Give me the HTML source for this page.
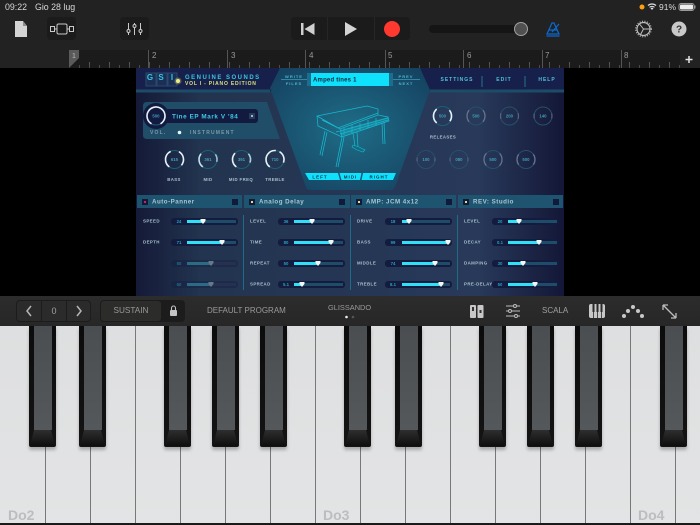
<!DOCTYPE html>
<html><head><meta charset="utf-8"><style>
html,body{margin:0;padding:0;background:#000}
#p{position:relative;width:700px;height:525px;overflow:hidden;background:#000;font-family:"Liberation Sans",sans-serif;filter:blur(.3px)}
.a{position:absolute}
.w{position:absolute;top:326px;height:197px;width:1px;background:#77787a}
.b{position:absolute;top:326px;width:27px;height:121px;background:linear-gradient(#0c0c0c,#141414);border-radius:0 0 2px 2px;box-shadow:0 3px 3px rgba(0,0,0,.25)}
.b i{position:absolute;left:5px;width:18px;top:0;height:104px;background:linear-gradient(#4a4e51,#55585b);display:block}
.b u{position:absolute;left:1px;right:1px;top:104px;height:16px;background:linear-gradient(#2e2e2e,#0e0e0e);clip-path:polygon(4px 0,21px 0,25px 100%,0 100%);display:block}
.n{position:absolute;top:507px;font-size:14px;font-weight:bold;color:#bcbdbe}
circle[pathLength]{fill:none}
</style></head><body><div id="p">
<div class="a" style="left:0;top:0;width:700px;height:50px;background:#222223"></div>
<div class="a" style="left:0;top:50px;width:70px;height:18px;background:#222223"></div>
<div class="a" style="left:70px;top:50px;width:610px;height:18px;background:#1b1b1c"></div>
<div class="a" style="left:680px;top:50px;width:20px;height:18px;background:#222223"></div>
<div class="a" style="left:70px;top:62px;width:610px;height:6px;background:repeating-linear-gradient(90deg,transparent 0,transparent 19px,#555 19px,#555 20px)"></div>
<div class="a" style="left:70px;top:65px;width:610px;height:3px;background:repeating-linear-gradient(90deg,transparent 0,transparent 9px,#4a4a4a 9px,#4a4a4a 10px)"></div>
<div class="a" style="left:5px;top:2px;font-size:8.800px;line-height:11px;color:#d8d8d8">09:22</div>
<div class="a" style="left:35px;top:2px;font-size:8.800px;line-height:11px;color:#d8d8d8">Gio 28 lug</div>
<div class="a" style="left:659px;top:2px;font-size:8.500px;line-height:11px;color:#d8d8d8">91%</div>
<div class="a" style="left:47px;top:17px;width:29px;height:23px;background:#1b1b1c;border-radius:4px"></div>
<div class="a" style="left:120px;top:17px;width:29px;height:23px;background:#1b1b1c;border-radius:4px"></div>
<div class="a" style="left:291px;top:17px;width:119px;height:23px;background:#1b1b1c;border-radius:4px"></div>
<div class="a" style="left:327px;top:17px;width:1px;height:23px;background:#262626"></div>
<div class="a" style="left:374px;top:17px;width:1px;height:23px;background:#262626"></div>
<div class="a" style="left:429px;top:25px;width:94px;height:8px;background:#151516;border-radius:4px"></div>
<div class="a" style="left:152px;top:51px;font-size:8px;color:#9a9a9a">2</div>
<div class="a" style="left:231px;top:51px;font-size:8px;color:#9a9a9a">3</div>
<div class="a" style="left:309px;top:51px;font-size:8px;color:#9a9a9a">4</div>
<div class="a" style="left:388px;top:51px;font-size:8px;color:#9a9a9a">5</div>
<div class="a" style="left:467px;top:51px;font-size:8px;color:#9a9a9a">6</div>
<div class="a" style="left:545px;top:51px;font-size:8px;color:#9a9a9a">7</div>
<div class="a" style="left:624px;top:51px;font-size:8px;color:#9a9a9a">8</div>
<svg class="a" style="left:0;top:0" width="700" height="70" viewBox="0 0 700 70">
<g stroke="#555" stroke-width="1"><path d="M148.500 50V68M227.500 50V68M305.500 50V68M385.500 50V68M463.500 50V68M542.500 50V68M621.500 50V68"/></g>
<path d="M69 50h10v8l-10 10z" fill="#5a5a5a"/><text x="72" y="58" font-size="7" fill="#bbb" font-family="Liberation Sans">1</text>
<path d="M15 21h8l4 5v11H15z" fill="#d4d4d4"/><path d="M23 21l4 5h-4z" fill="#8d8d8d"/>
<g fill="none" stroke="#c9c9c9" stroke-width="1"><rect x="50.500" y="26.500" width="4" height="5"/><rect x="57" y="24" width="10" height="10" rx="1.500"/><rect x="69.500" y="26.500" width="4" height="5"/><path d="M54.500 29H57M67 29h2.500M128.500 23v12M134.500 23v12M140.500 23v12"/></g>
<g fill="#1b1b1c" stroke="#c9c9c9"><circle cx="128.500" cy="31" r="1.500"/><circle cx="134.500" cy="26" r="1.500"/><circle cx="140.500" cy="31" r="1.500"/></g>
<path d="M301 23h2.500v12H301zM314.500 23v12l-10-6z" fill="#cfcfcf"/>
<path d="M345 22l12 7-12 7z" fill="#d4d4d4"/>
<circle cx="392" cy="29" r="8" fill="#ff3830"/>
<circle cx="521" cy="29" r="6.500" fill="#505050" stroke="#a2a2a2"/>
<g fill="none" stroke="#0a6ad0" stroke-width="1.200"><path d="M547 34l5-11h2l5 11zM546.500 36h13M549 30h8M552 32l7-8"/></g>
<circle cx="643.500" cy="29" r="6.500" fill="none" stroke="#bdbdbd" stroke-width="1.200"/><circle cx="643.500" cy="29" r="7.800" fill="none" stroke="#bdbdbd" stroke-width="1.200" stroke-dasharray="1 1.500"/>
<path d="M643.500 29l-4-5M643.500 29l6.500 0M643.500 29l-3 5.500" stroke="#bdbdbd" fill="none"/>
<circle cx="679" cy="29" r="7.500" fill="#c9c9c9"/><text x="679" y="32.500" font-size="10" font-weight="bold" text-anchor="middle" fill="#333" font-family="Liberation Sans">?</text>
<circle cx="642" cy="7" r="2.500" fill="#ff9f0a"/>
<path d="M648 5.500a6 6 0 0 1 8 0M649.500 7.300a4 4 0 0 1 5 0" stroke="#ddd" fill="none" stroke-width="1.200"/><path d="M652 10l-1.500-1.700a2 2 0 0 1 3 0z" fill="#ddd"/>
<rect x="679" y="3.500" width="15" height="7" rx="2" fill="none" stroke="#999"/><rect x="680" y="4.500" width="13" height="5" rx="1" fill="#eee"/><rect x="694.500" y="5.500" width="1" height="3" fill="#999"/>
<path d="M689 56v7M685.500 59.500h7" stroke="#e4e4e4" stroke-width="1.500"/>
</svg>

<svg class="a" style="left:136px;top:68px;filter:blur(.25px)" width="428" height="228" viewBox="136 68 428 228" font-family="Liberation Sans" font-weight="bold">
<defs>
<linearGradient id="bg" x1="0" x2="1" y1="0" y2="0"><stop offset="0" stop-color="#141a38"/><stop offset=".15" stop-color="#22344f"/><stop offset=".8" stop-color="#28395a"/><stop offset="1" stop-color="#141737"/></linearGradient>
<radialGradient id="tl" cx=".5" cy=".5" r=".7"><stop offset="0" stop-color="#1f6d87"/><stop offset="1" stop-color="#143f5e"/></radialGradient>
</defs>
<rect x="136" y="68" width="428" height="228" fill="url(#bg)"/>
<rect x="136" y="68" width="144" height="23" fill="#17204a"/>
<rect x="420" y="68" width="144" height="23" fill="#17204a"/>
<path d="M136 91h134M430 91h134" stroke="#1d4c68" stroke-width="3"/>
<path d="M280 68H420L430 90 395 187Q394 190 390 190H310Q307 190 306 187L270 88z" fill="url(#tl)"/>
<path d="M143 106q0-4 4-4H267L280 139H147q-4 0-4-4z" fill="#204d68"/>
<rect x="146" y="73" width="10" height="13" fill="#1b2f56" stroke="#2a4a6a"/><rect x="157" y="73" width="10" height="13" fill="#1b2f56" stroke="#2a4a6a"/><rect x="168" y="73" width="9" height="13" fill="#1b2f56" stroke="#2a4a6a"/>
<g font-size="8" fill="#37c4e0" text-anchor="middle"><text x="150" y="80">G</text><text x="161" y="80">S</text><text x="172" y="80">I</text></g>
<circle cx="178" cy="81" r="2" fill="#f0f080"/><circle cx="178" cy="81" r="3.500" fill="#f0f080" opacity=".3"/>
<text x="185" y="79" font-size="6" letter-spacing="1.500" fill="#3bc5dd">GENUINE SOUNDS</text>
<text x="185" y="84.800" font-size="5" letter-spacing=".8" fill="#dde080">VOL I - PIANO EDITION</text>
<g font-size="4" letter-spacing="1" fill="#4fb7cf" text-anchor="middle"><text x="294" y="78">WRITE</text><text x="294" y="85">FILES</text><text x="406" y="78">PREV</text><text x="406" y="85">NEXT</text></g>
<path d="M281 79.500h27M392 79.500h28" stroke="#3b9cb8" stroke-width=".7"/>
<rect x="307" y="73" width="5" height="13" fill="#1d6e8c"/><rect x="388" y="73" width="5" height="13" fill="#1d6e8c"/>
<rect x="311" y="73" width="78" height="13" fill="#0fe0fb"/>
<text x="313" y="81.500" font-size="6" fill="#0b2940" letter-spacing=".2">Amped tines 1</text>
<g font-size="5" letter-spacing="1" fill="#4fc0d8" text-anchor="middle"><text x="457" y="81">SETTINGS</text><text x="504" y="81">EDIT</text><text x="547" y="81">HELP</text></g>
<path d="M482 76v11M525 76v11" stroke="#26708d"/>
<rect x="165" y="109" width="93" height="14" rx="3" fill="#121a40"/>
<text x="172" y="118.500" font-size="6.300" letter-spacing=".6" fill="#3ccbe4">Tine EP Mark V '84</text>
<rect x="249" y="113" width="6" height="6" fill="#2a3a5e"/><rect x="251" y="115" width="2" height="2" fill="#8ca"/>
<circle cx="156" cy="116" r="13" fill="#121a40"/>
<g font-size="5" letter-spacing="1.200" fill="#7d98a8"><text x="150" y="134">VOL.</text><text x="190" y="134">INSTRUMENT</text></g>
<circle cx="179.500" cy="132.500" r="1.800" fill="#e8f6fa"/>
<!-- knob tracks -->
<g fill="none" stroke="#1b5f77" stroke-width="1.100">
<circle cx="156" cy="116" r="9"/>
<circle cx="174.500" cy="159.500" r="9"/><circle cx="208" cy="159.500" r="9"/><circle cx="241.500" cy="159.500" r="9"/><circle cx="275" cy="159.500" r="9"/>
<circle cx="442.500" cy="116" r="9.500"/></g>
<g fill="none" stroke="#27506b" stroke-width="1">
<circle cx="476" cy="116" r="9"/><circle cx="509.500" cy="116" r="9"/><circle cx="543" cy="116" r="9"/>
<circle cx="426" cy="159.500" r="9"/><circle cx="459" cy="159.500" r="9"/><circle cx="493" cy="159.500" r="9"/><circle cx="526" cy="159.500" r="9"/></g>
<!-- bright arcs -->
<g stroke="#e4f3f7" stroke-width="1.600">
<circle pathLength="360" cx="156" cy="116" r="9" stroke-dasharray="300 60" transform="rotate(120 156 116)"/>
<circle pathLength="360" cx="174.500" cy="159.500" r="9" stroke-dasharray="120 240" transform="rotate(125 174.500 159.500)"/>
<circle pathLength="360" cx="174.500" cy="159.500" r="9" stroke-dasharray="100 260" transform="rotate(300 174.500 159.500)"/>
<circle pathLength="360" cx="208" cy="159.500" r="9" stroke-dasharray="95 265" transform="rotate(125 208 159.500)" stroke="#bfe4ed"/>
<circle pathLength="360" cx="208" cy="159.500" r="9" stroke-dasharray="50 310" transform="rotate(325 208 159.500)" stroke="#8fc5d3"/>
<circle pathLength="360" cx="241.500" cy="159.500" r="9" stroke-dasharray="100 260" transform="rotate(125 241.500 159.500)"/>
<circle pathLength="360" cx="241.500" cy="159.500" r="9" stroke-dasharray="60 300" transform="rotate(320 241.500 159.500)" stroke="#a4d3de"/>
<circle pathLength="360" cx="275" cy="159.500" r="9" stroke-dasharray="150 210" transform="rotate(125 275 159.500)"/>
<circle pathLength="360" cx="275" cy="159.500" r="9" stroke-dasharray="80 280" transform="rotate(300 275 159.500)"/>
<circle pathLength="360" cx="442.500" cy="116" r="9" stroke-dasharray="100 260" transform="rotate(130 442.500 116)"/>
<circle pathLength="360" cx="442.500" cy="116" r="9" stroke-dasharray="75 285" transform="rotate(320 442.500 116)"/>
</g>
<!-- dim arcs -->
<g stroke="#66748c" stroke-width="1.300">
<circle pathLength="360" cx="476" cy="116" r="9" stroke-dasharray="80 280" transform="rotate(140 476 116)"/>
<circle pathLength="360" cx="476" cy="116" r="9" stroke-dasharray="80 280" transform="rotate(320 476 116)"/>
<circle pathLength="360" cx="493" cy="159.500" r="9" stroke-dasharray="85 275" transform="rotate(138 493 159.500)"/>
<circle pathLength="360" cx="493" cy="159.500" r="9" stroke-dasharray="85 275" transform="rotate(318 493 159.500)"/>
<circle pathLength="360" cx="526" cy="159.500" r="9" stroke-dasharray="70 290" transform="rotate(145 526 159.500)"/>
<circle pathLength="360" cx="526" cy="159.500" r="9" stroke-dasharray="70 290" transform="rotate(325 526 159.500)"/>
</g>
<g stroke="#55647c" stroke-width="1.200">
<circle pathLength="360" cx="509.500" cy="116" r="9" stroke-dasharray="36 324" transform="rotate(162 509.500 116)"/>
<circle pathLength="360" cx="509.500" cy="116" r="9" stroke-dasharray="36 324" transform="rotate(342 509.500 116)"/>
<circle pathLength="360" cx="543" cy="116" r="9" stroke-dasharray="30 330" transform="rotate(165 543 116)"/>
<circle pathLength="360" cx="543" cy="116" r="9" stroke-dasharray="30 330" transform="rotate(345 543 116)"/>
<circle pathLength="360" cx="426" cy="159.500" r="9" stroke-dasharray="24 336" transform="rotate(168 426 159.500)"/>
<circle pathLength="360" cx="426" cy="159.500" r="9" stroke-dasharray="24 336" transform="rotate(348 426 159.500)"/>
<circle pathLength="360" cx="459" cy="159.500" r="9" stroke-dasharray="24 336" transform="rotate(168 459 159.500)"/>
<circle pathLength="360" cx="459" cy="159.500" r="9" stroke-dasharray="24 336" transform="rotate(348 459 159.500)"/>
</g>
<g font-size="4.300" fill="#3f9db6" text-anchor="middle"><text x="156" y="117.500">500</text><text x="174.500" y="161">615</text><text x="208" y="161">361</text><text x="241.500" y="161">391</text><text x="275" y="161">710</text><text x="442.500" y="117.500">500</text><text x="476" y="117.500">500</text><text x="509.500" y="117.500">200</text><text x="543" y="117.500">140</text><text x="426" y="161">100</text><text x="459" y="161">080</text><text x="493" y="161">500</text><text x="526" y="161">500</text></g>
<g font-size="4.300" letter-spacing=".4" fill="#a8c0cc" text-anchor="middle"><text x="174" y="181">BASS</text><text x="208" y="181">MID</text><text x="241" y="181">MID FREQ</text><text x="275" y="181">TREBLE</text><text x="443" y="138.500">RELEASES</text></g>
<!-- piano -->
<path d="M340 130L388 117 389 121 342 137z" fill="#1aa6bd" opacity=".45"/>
<g fill="none" stroke="#17b8cf" stroke-width=".75">
<path d="M317 116L367 106 378 109 378 115 388 117 389 121 342 137 318 126zM317 116L340 129 378 115M340 129L342 137M322 120L338 128 378 113M336 132L388 118M340 134L388 120M344 128V135M352 125V133M360 123V130M368 120V128M376 118V125"/>
<path d="M325 131L320 155M327 132L322 156M342 137L336 167M344 137L338 167M382 123L383 144M384 122L385 144M353 133L355 146M357 132L358 147"/>
</g>
<path d="M353 145l6 2 6 3-2 2-6-2-5-3z" fill="#146a82" stroke="#17b8cf" stroke-width=".6"/>
<path d="M305 173H338L340 180H309zM339.500 173H361.500L360 180H341.500zM363 173H396L393 180H361.500z" fill="#0fe0fb"/>
<g font-size="4.500" letter-spacing="1" fill="#0b3048" text-anchor="middle"><text x="320" y="178.500">LEFT</text><text x="350.500" y="178.500">MIDI</text><text x="379" y="178.500">RIGHT</text></g>
<rect x="137" y="195" width="105" height="13" fill="#1e5470"/><rect x="244" y="195" width="106" height="13" fill="#1e5470"/><rect x="351" y="195" width="105" height="13" fill="#1e5470"/><rect x="458" y="195" width="105" height="13" fill="#1e5470"/>
<g fill="#121a3c"><rect x="142" y="199" width="6" height="6"/><rect x="249" y="199" width="6" height="6"/><rect x="356" y="199" width="6" height="6"/><rect x="463" y="199" width="6" height="6"/><rect x="232" y="199" width="6" height="6"/><rect x="339" y="199" width="6" height="6"/><rect x="446" y="199" width="6" height="6"/><rect x="553" y="199" width="6" height="6"/></g>
<rect x="144" y="201" width="2" height="2" fill="#d0205a"/><rect x="251" y="201" width="2" height="2" fill="#e0e080"/><rect x="358" y="201" width="2" height="2" fill="#e0e080"/><rect x="465" y="201" width="2" height="2" fill="#e0e080"/>
<g font-size="6.200" letter-spacing=".5" fill="#a9c6d2"><text x="152" y="203.500">Auto-Panner</text><text x="259" y="203.500">Analog Delay</text><text x="366" y="203.500">AMP: JCM 4x12</text><text x="473" y="203.500">REV: Studio</text></g>
<path d="M243.500 215V290M350.500 215V290M457.500 215V290" stroke="#1c6c8a" stroke-width="1"/>
<g font-size="4.400" letter-spacing=".4" fill="#a8c0cc">
<text x="143" y="222.500">SPEED</text><text x="143" y="243.500">DEPTH</text>
<text x="250" y="222.500">LEVEL</text><text x="250" y="243.500">TIME</text><text x="250" y="264.500">REPEAT</text><text x="250" y="285.500">SPREAD</text>
<text x="357" y="222.500">DRIVE</text><text x="357" y="243.500">BASS</text><text x="357" y="264.500">MIDDLE</text><text x="357" y="285.500">TREBLE</text>
<text x="464" y="222.500">LEVEL</text><text x="464" y="243.500">DECAY</text><text x="464" y="264.500">DAMPING</text><text x="464" y="285.500">PRE-DELAY</text></g>
<g fill="#131b3e">
<rect x="171" y="218" width="67" height="7" rx="3"/><rect x="171" y="239" width="67" height="7" rx="3"/><rect x="171" y="260" width="67" height="7" rx="3" opacity=".35"/><rect x="171" y="281" width="67" height="7" rx="3" opacity=".35"/>
<rect x="278" y="218" width="67" height="7" rx="3"/><rect x="278" y="239" width="67" height="7" rx="3"/><rect x="278" y="260" width="67" height="7" rx="3"/><rect x="278" y="281" width="67" height="7" rx="3"/>
<rect x="385" y="218" width="67" height="7" rx="3"/><rect x="385" y="239" width="67" height="7" rx="3"/><rect x="385" y="260" width="67" height="7" rx="3"/><rect x="385" y="281" width="67" height="7" rx="3"/>
<rect x="492" y="218" width="67" height="7" rx="3"/><rect x="492" y="239" width="67" height="7" rx="3"/><rect x="492" y="260" width="67" height="7" rx="3"/><rect x="492" y="281" width="67" height="7" rx="3"/></g>
<g fill="#1f4d69">
<rect x="187" y="220" width="49" height="3"/><rect x="187" y="241" width="49" height="3"/>
<rect x="294" y="220" width="49" height="3"/><rect x="294" y="241" width="49" height="3"/><rect x="294" y="262" width="49" height="3"/><rect x="294" y="283" width="49" height="3"/>
<rect x="402" y="220" width="48" height="3"/><rect x="402" y="241" width="48" height="3"/><rect x="402" y="262" width="48" height="3"/><rect x="402" y="283" width="48" height="3"/>
<rect x="508" y="220" width="49" height="3"/><rect x="508" y="241" width="49" height="3"/><rect x="508" y="262" width="49" height="3"/><rect x="508" y="283" width="49" height="3"/></g>
<g fill="#25314f"><rect x="187" y="262" width="49" height="3"/><rect x="187" y="283" width="49" height="3"/></g>
<g fill="#2fe0f6">
<rect x="187" y="220" width="16" height="3"/><rect x="187" y="241" width="35" height="3"/>
<rect x="294" y="220" width="18" height="3"/><rect x="294" y="241" width="37" height="3"/><rect x="294" y="262" width="24" height="3"/><rect x="294" y="283" width="8" height="3"/>
<rect x="402" y="220" width="7" height="3"/><rect x="402" y="241" width="46" height="3"/><rect x="402" y="262" width="33" height="3"/><rect x="402" y="283" width="39" height="3"/>
<rect x="508" y="220" width="11" height="3"/><rect x="508" y="241" width="31" height="3"/><rect x="508" y="262" width="15" height="3"/><rect x="508" y="283" width="27" height="3"/></g>
<g fill="#2a6c83"><rect x="187" y="262" width="24" height="3"/><rect x="187" y="283" width="24" height="3"/></g>
<g fill="#f2f6f7">
<path d="M200.500 219h5v2l-2.500 3-2.500-3zM219.500 240h5v2l-2.500 3-2.500-3zM309.500 219h5v2l-2.500 3-2.500-3zM328.500 240h5v2l-2.500 3-2.500-3zM315.500 261h5v2l-2.500 3-2.500-3zM299.500 282h5v2l-2.500 3-2.500-3zM406.500 219h5v2l-2.500 3-2.500-3zM445.500 240h5v2l-2.500 3-2.500-3zM432.500 261h5v2l-2.500 3-2.500-3zM438.500 282h5v2l-2.500 3-2.500-3zM516.500 219h5v2l-2.500 3-2.500-3zM536.500 240h5v2l-2.500 3-2.500-3zM520.500 261h5v2l-2.500 3-2.500-3zM532.500 282h5v2l-2.500 3-2.500-3z"/></g>
<path d="M208.500 261h5v2l-2.500 3-2.500-3zM208.500 282h5v2l-2.500 3-2.500-3z" fill="#66788a"/>
<g font-size="4.300" fill="#2b9fbe" text-anchor="middle"><text x="179" y="223">24</text><text x="179" y="244">71</text><text x="179" y="265" opacity=".6">50</text><text x="179" y="286" opacity=".6">50</text><text x="286" y="223">36</text><text x="286" y="244">80</text><text x="286" y="265">50</text><text x="286" y="286">5.1</text><text x="393" y="223">18</text><text x="393" y="244">99</text><text x="393" y="265">74</text><text x="393" y="286">8.1</text><text x="500" y="223">20</text><text x="500" y="244">0.1</text><text x="500" y="265">30</text><text x="500" y="286">50</text></g>
</svg>

<div class="a" style="left:0;top:296px;width:700px;height:30px;background:linear-gradient(#2c2c2d,#272728)"></div>
<div class="a" style="left:16px;top:300px;width:75px;height:22px;background:#1c1c1d;border-radius:4px"></div>
<div class="a" style="left:17px;top:301px;width:24px;height:20px;background:#2b2b2c;border-radius:3px 0 0 3px"></div>
<div class="a" style="left:42px;top:301px;width:24px;height:20px;background:#2b2b2c"></div>
<div class="a" style="left:67px;top:301px;width:23px;height:20px;background:#2b2b2c;border-radius:0 3px 3px 0"></div>
<div class="a" style="left:42px;top:301px;width:24px;text-align:center;font-size:9px;line-height:20px;color:#a0a0a0">0</div>
<div class="a" style="left:100px;top:300px;width:85px;height:22px;background:#1c1c1d;border-radius:4px"></div>
<div class="a" style="left:101px;top:301px;width:60px;height:20px;background:#2c2d2b;border-radius:3px;text-align:center;font-size:8.200px;line-height:20px;color:#9a9a9a">SUSTAIN</div>
<div class="a" style="left:207px;top:305px;font-size:8px;line-height:12px;color:#9a9a9a;white-space:nowrap">DEFAULT PROGRAM</div>
<div class="a" style="left:328px;top:302px;font-size:7.400px;line-height:12px;color:#9a9a9a;white-space:nowrap">GLISSANDO</div>
<div class="a" style="left:542px;top:305px;font-size:8px;line-height:12px;color:#a0a0a0">SCALA</div>
<svg class="a" style="left:0;top:296px" width="700" height="30" viewBox="0 296 700 30">
<path d="M31 306l-4 5 4 5M77 306l4 5-4 5" fill="none" stroke="#b5b5b5" stroke-width="1.500"/>
<rect x="170" y="310" width="7" height="6" rx="1" fill="#c4c4c4"/><path d="M171.500 310v-2a2 2 0 0 1 4 0v2" fill="none" stroke="#c4c4c4" stroke-width="1.100"/>
<circle cx="346.500" cy="317" r="1.300" fill="#eee"/><circle cx="353" cy="317" r="1.300" fill="#555"/>
<rect x="470" y="305" width="6" height="13" rx="1" fill="#c8c8c8"/><rect x="477.500" y="305" width="6" height="13" rx="1" fill="#c8c8c8"/><rect x="472" y="307" width="2" height="4" fill="#333"/><rect x="479.500" y="310" width="2" height="3" fill="#333"/>
<path d="M506 306h14M506 311h14M506 316h14" stroke="#bbb"/><g fill="#2a2a2b" stroke="#bbb"><circle cx="515" cy="306" r="1.500"/><circle cx="510" cy="311" r="1.500"/><circle cx="516" cy="316" r="1.500"/></g>
<rect x="589" y="304" width="16" height="14" rx="2" fill="#c8c8c8"/><path d="M593.500 304v14M597.500 304v14M601.500 304v14" stroke="#2a2a2b" stroke-width=".8"/><path d="M593.500 304v8M597.500 304v8M601.500 304v8" stroke="#2a2a2b" stroke-width="2"/>
<g fill="#c8c8c8"><circle cx="633" cy="307" r="2"/><circle cx="628" cy="311" r="2"/><circle cx="638" cy="311" r="2"/><circle cx="624" cy="316" r="2"/><circle cx="642" cy="316" r="2"/></g>
<path d="M663 305l13 13M663 305h5M663 305v5M676 318h-5M676 318v-5" fill="none" stroke="#bdbdbd" stroke-width="1.300"/>
</svg>

<div class="a" style="left:0;top:326px;width:700px;height:199px;background:linear-gradient(#dedfe0,#e3e4e5);"></div>
<div class="a" style="left:0;top:523px;width:700px;height:2px;background:#1a1a1a"></div>
<div class="w" style="left:45px"></div><div class="w" style="left:90px"></div><div class="w" style="left:135px"></div><div class="w" style="left:180px"></div><div class="w" style="left:225px"></div><div class="w" style="left:270px"></div><div class="w" style="left:315px"></div><div class="w" style="left:360px"></div><div class="w" style="left:405px"></div><div class="w" style="left:450px"></div><div class="w" style="left:495px"></div><div class="w" style="left:540px"></div><div class="w" style="left:585px"></div><div class="w" style="left:630px"></div><div class="w" style="left:675px"></div>
<div class="b" style="left:29px"><i></i><u></u></div>
<div class="b" style="left:79px"><i></i><u></u></div>
<div class="b" style="left:164px"><i></i><u></u></div>
<div class="b" style="left:212px"><i></i><u></u></div>
<div class="b" style="left:260px"><i></i><u></u></div>
<div class="b" style="left:344px"><i></i><u></u></div>
<div class="b" style="left:395px"><i></i><u></u></div>
<div class="b" style="left:479px"><i></i><u></u></div>
<div class="b" style="left:527px"><i></i><u></u></div>
<div class="b" style="left:575px"><i></i><u></u></div>
<div class="b" style="left:660px"><i></i><u></u></div>
<div class="n" style="left:8px">Do2</div>
<div class="n" style="left:323px">Do3</div>
<div class="n" style="left:638px">Do4</div>
</div></body></html>
